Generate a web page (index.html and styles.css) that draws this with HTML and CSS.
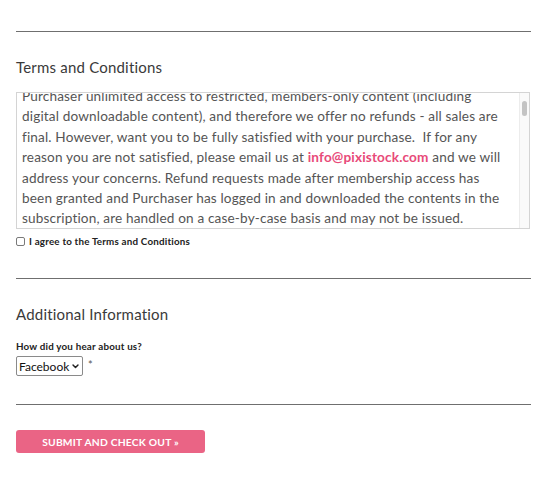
FILE: index.html
```html
<!DOCTYPE html>
<html lang="en">
<head>
<meta charset="utf-8">
<title>Checkout</title>
<link rel="stylesheet" href="styles.css">
</head>
<body>
<div class="page">
  <hr class="rule rule-top">
  <section class="section terms">
    <h2 class="heading">Terms and Conditions</h2>
    <div class="tbox">
      <div class="tview">
        <div class="ttext">Purchaser unlimited access to restricted, members-only content (including digital downloadable content), and therefore we offer no refunds - all sales are final. However, want you to be fully satisfied with your purchase.&nbsp; If for any reason you are not satisfied, please email us at <a class="mail" href="#">info@pixistock.com</a> and we will address your concerns. Refund requests made after membership access has been granted and Purchaser has logged in and downloaded the contents in the subscription, are handled on a case-by-case basis and may not be issued. Memberships renew automatically until cancelled from your account page.</div>
      </div>
      <div class="track"><div class="thumb"></div></div>
    </div>
    <label class="agree"><input type="checkbox" class="check"> I agree to the Terms and Conditions</label>
  </section>
  <hr class="rule rule-mid">
  <section class="section info">
    <h2 class="heading">Additional Information</h2>
    <div class="field-label">How did you hear about us?</div>
    <div class="field-row">
      <div class="select">
        <select class="select-input"><option>Facebook</option></select>
        <svg class="chev" width="7" height="5" viewBox="0 0 7 5"><path d="M1 1 L3.5 3.6 L6 1" fill="none" stroke="#222" stroke-width="1.4" stroke-linecap="round" stroke-linejoin="round"/></svg>
      </div>
      <span class="req">*</span>
    </div>
  </section>
  <hr class="rule rule-bottom">
  <button class="submit" type="button">SUBMIT AND CHECK OUT »</button>
</div>
</body>
</html>
```
FILE: styles.css
```css
html, body {
  margin: 0;
  padding: 0;
  background: #fff;
}
body {
  font-family: Lato, "Liberation Sans", sans-serif;
  color: #333;
}
.page {
  width: 515px;
  margin-left: 16px;
  padding-top: 31px;
}
.rule {
  border: 0;
  height: 1px;
  background: #6f6f6f;
  margin: 0;
}
.section {
  display: flex;
  flex-direction: column;
}
.heading {
  font-size: 15px;
  font-weight: 400;
  line-height: 20px;
  margin: 25px 0 0 0;
  color: #3a3a3a;
  letter-spacing: 0.2px;
}
.tbox {
  margin-top: 15px;
  width: 512px;
  height: 135px;
  border: 1px solid #d4d4d4;
  display: flex;
}
.tview {
  flex: 1;
  overflow: hidden;
  padding: 0 8px 0 5px;
}
.ttext {
  margin-top: -7px;
  font-size: 13.6px;
  line-height: 20.4px;
  color: #555;
  letter-spacing: 0.15px;
}
.mail {
  color: #e84a79;
  font-weight: 700;
  text-decoration: none;
}
.track {
  width: 9px;
  background: #fafafa;
  border-left: 1px solid #ececec;
  display: flex;
  justify-content: center;
}
.thumb {
  margin-top: 8px;
  width: 5px;
  height: 15px;
  border-radius: 3px;
  background: #c4c4c4;
}
.agree {
  display: flex;
  align-items: center;
  gap: 4px;
  margin-top: 6px;
  font-size: 9.8px;
  font-weight: 700;
  color: #222;
  line-height: 12px;
  letter-spacing: 0.2px;
}
.check {
  appearance: none;
  -webkit-appearance: none;
  margin: 0;
  width: 9px;
  height: 9px;
  border: 1px solid #7a7a7a;
  border-radius: 2px;
  background: #fff;
}
.rule-mid {
  margin-top: 31px;
}
.info .heading {
  margin-top: 25px;
}
.field-label {
  margin-top: 16px;
  font-size: 9.8px;
  font-weight: 700;
  color: #222;
  line-height: 12px;
  letter-spacing: 0.2px;
}
.field-row {
  display: flex;
  align-items: center;
  gap: 5px;
  margin-top: 4px;
}
.select {
  display: flex;
  align-items: center;
  height: 18px;
  border: 1px solid #8a8a8a;
  border-radius: 2px;
  padding: 0 3px 0 2px;
  background: #fff;
}
.select-input {
  appearance: none;
  -webkit-appearance: none;
  border: 0;
  padding: 0;
  margin: 0;
  background: transparent;
  font-family: Lato, "Liberation Sans", sans-serif;
  font-size: 12px;
  color: #111;
  outline: none;
}
.chev {
  margin-left: 2px;
}
.req {
  font-size: 11px;
  color: #555;
  margin-top: -3px;
}
.rule-bottom {
  margin-top: 28px;
}
.submit {
  margin-top: 25px;
  width: 189px;
  height: 23px;
  border: 0;
  border-radius: 3px;
  background: #ea6485;
  color: #fff;
  font-family: Lato, "Liberation Sans", sans-serif;
  font-weight: 700;
  font-size: 10.3px;
  letter-spacing: 0.2px;
  padding: 0;
  display: block;
}
```
